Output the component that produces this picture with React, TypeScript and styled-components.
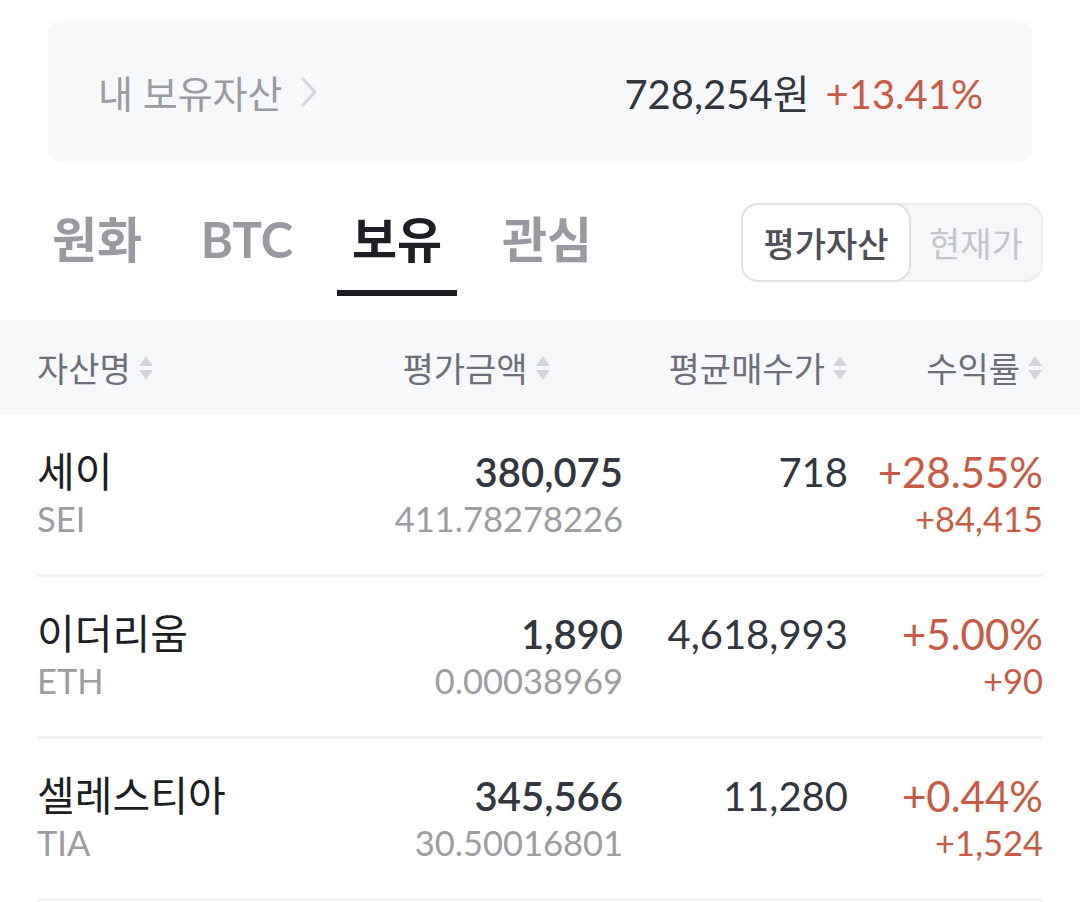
import React from "react";
import styled, { createGlobalStyle } from "styled-components";

const Global = createGlobalStyle`
  html, body { margin: 0; padding: 0; background: #ffffff; }
  body { font-family: "Lato", "Noto Sans CJK KR", "Noto Sans", sans-serif; -webkit-font-smoothing: antialiased; }
  * { box-sizing: border-box; }
`;

const RED = "#c95b46";

const Page = styled.div`
  width: 1080px;
  padding-top: 20px;
`;

const SummaryCard = styled.div`
  margin: 0 48px;
  height: 143px;
  border-radius: 14px;
  background: #f7f8fa;
  display: flex;
  align-items: center;
  justify-content: space-between;
  padding: 0 49px 0 50px;
`;

const SummaryLabel = styled.div`
  display: flex;
  align-items: center;
  gap: 16px;
  font-size: 38px;
  color: #9b9ca1;
`;

const SummaryValue = styled.div`
  display: flex;
  align-items: baseline;
  gap: 16px;
  font-size: 40px;
`;

const Amount = styled.span`
  color: #33363d;
`;

const Rate = styled.span`
  color: ${RED};
`;

const TabBar = styled.div`
  display: flex;
  justify-content: space-between;
  padding: 36px 37px 0 37px;
  margin-bottom: 24px;
`;

const Tabs = styled.div`
  display: flex;
  gap: 30px;
`;

const Tab = styled.div<{ $active?: boolean }>`
  width: 120px;
  height: 97px;
  text-align: center;
  line-height: 80px;
  font-size: 49px;
  font-weight: 700;
  color: ${(p) => (p.$active ? "#1d1f24" : "#999a9f")};
  border-bottom: 6px solid ${(p) => (p.$active ? "#1d1f24" : "transparent")};
`;

const Toggle = styled.div`
  margin-top: 4px;
  width: 302px;
  height: 79px;
  border: 2px solid #ededef;
  background: #f6f7f9;
  border-radius: 18px;
  display: flex;
`;

const ToggleItem = styled.div<{ $active?: boolean }>`
  flex: ${(p) => (p.$active ? "0 0 170px" : "1")};
  margin: ${(p) => (p.$active ? "-2px 0 -2px -2px" : "0")};
  border-radius: 17px;
  border: ${(p) => (p.$active ? "2px solid #e1e2e5" : "none")};
  background: ${(p) => (p.$active ? "#ffffff" : "transparent")};
  display: flex;
  align-items: center;
  justify-content: center;
  font-size: 34px;
  font-weight: ${(p) => (p.$active ? 500 : 400)};
  color: ${(p) => (p.$active ? "#4d5057" : "#c3c5c9")};
`;

const Grid = styled.div`
  display: grid;
  grid-template-columns: 1fr 293px 225px 195px;
`;

const HeaderRow = styled(Grid)`
  height: 95px;
  background: #f7f8fa;
  padding: 0 37px;
  align-items: center;
`;

const HeaderCell = styled.div<{ $justify: string }>`
  display: flex;
  align-items: center;
  justify-content: ${(p) => p.$justify};
  gap: 7px;
  font-size: 34px;
  color: #6d7078;
`;

const Rows = styled.div`
  padding: 0 37px;
`;

const Row = styled(Grid)`
  height: 162px;
  padding-top: 32px;
  border-bottom: 3px solid #f1f2f4;
`;

const Cell = styled.div<{ $align: string }>`
  display: flex;
  flex-direction: column;
  align-items: ${(p) => p.$align};
`;

const Main = styled.div<{ $weight?: number; $color?: string; $size?: number }>`
  height: 50px;
  line-height: 50px;
  font-size: ${(p) => p.$size ?? 40}px;
  font-weight: ${(p) => p.$weight ?? 400};
  color: ${(p) => p.$color ?? "#33363d"};
  white-space: nowrap;
`;

const Name = styled(Main)`
  font-size: 41px;
  color: #1d1f24;
`;

const Sub = styled.div<{ $color?: string }>`
  height: 44px;
  line-height: 44px;
  font-size: 34.5px;
  color: ${(p) => p.$color ?? "#9b9da2"};
  white-space: nowrap;
`;

const Chevron = () => (
  <svg width="20" height="32" viewBox="0 0 20 32" fill="none">
    <path d="M4 3 L16 16 L4 29" stroke="#d6d7da" strokeWidth="3.2" strokeLinecap="round" strokeLinejoin="round" />
  </svg>
);

const SortIcon = () => (
  <svg width="16" height="30" viewBox="0 0 16 30">
    <path d="M8 3 L15 13 L1 13 Z" fill="#d4d5d9" />
    <path d="M1 17 L15 17 L8 27 Z" fill="#d4d5d9" />
  </svg>
);

type Coin = {
  name: string;
  sym: string;
  value: string;
  qty: string;
  avg: string;
  rate: string;
  profit: string;
};

const coins: Coin[] = [
  { name: "세이", sym: "SEI", value: "380,075", qty: "411.78278226", avg: "718", rate: "+28.55%", profit: "+84,415" },
  { name: "이더리움", sym: "ETH", value: "1,890", qty: "0.00038969", avg: "4,618,993", rate: "+5.00%", profit: "+90" },
  { name: "셀레스티아", sym: "TIA", value: "345,566", qty: "30.50016801", avg: "11,280", rate: "+0.44%", profit: "+1,524" },
];

export default function App() {
  return (
    <Page>
      <Global />
      <SummaryCard>
        <SummaryLabel>
          내 보유자산
          <Chevron />
        </SummaryLabel>
        <SummaryValue>
          <Amount>728,254원</Amount>
          <Rate>+13.41%</Rate>
        </SummaryValue>
      </SummaryCard>

      <TabBar>
        <Tabs>
          <Tab>원화</Tab>
          <Tab>BTC</Tab>
          <Tab $active>보유</Tab>
          <Tab>관심</Tab>
        </Tabs>
        <Toggle>
          <ToggleItem $active>평가자산</ToggleItem>
          <ToggleItem>현재가</ToggleItem>
        </Toggle>
      </TabBar>

      <HeaderRow>
        <HeaderCell $justify="flex-start">
          자산명
          <SortIcon />
        </HeaderCell>
        <HeaderCell $justify="center">
          평가금액
          <SortIcon />
        </HeaderCell>
        <HeaderCell $justify="flex-end">
          평균매수가
          <SortIcon />
        </HeaderCell>
        <HeaderCell $justify="flex-end">
          수익률
          <SortIcon />
        </HeaderCell>
      </HeaderRow>

      <Rows>
        {coins.map((c) => (
          <Row key={c.sym}>
            <Cell $align="flex-start">
              <Name>{c.name}</Name>
              <Sub>{c.sym}</Sub>
            </Cell>
            <Cell $align="flex-end">
              <Main $weight={600}>{c.value}</Main>
              <Sub>{c.qty}</Sub>
            </Cell>
            <Cell $align="flex-end">
              <Main>{c.avg}</Main>
            </Cell>
            <Cell $align="flex-end">
              <Main $color={RED} $size={42}>{c.rate}</Main>
              <Sub $color={RED}>{c.profit}</Sub>
            </Cell>
          </Row>
        ))}
      </Rows>
    </Page>
  );
}
